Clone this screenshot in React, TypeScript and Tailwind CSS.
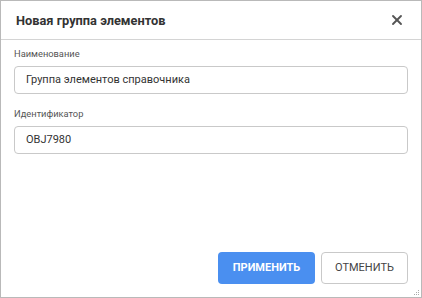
import { X } from 'lucide-react';

const font = { fontFamily: 'Roboto, "Noto Sans", sans-serif' };

function Field({ label, value }: { label: string; value: string }) {
  return (
    <div className="flex flex-col">
      <label className="h-[14px] text-[9.3px] leading-[14px] text-[#555]">{label}</label>
      <div className="mt-[5px] flex h-[28px] items-center rounded-[4px] border border-[#c9c9c9] px-[11px] text-[11px] text-[#333]">
        {value}
      </div>
    </div>
  );
}

export default function App() {
  return (
    <div
      className="relative flex h-[298px] w-[422px] flex-col border border-[#b9b9b9] bg-white"
      style={font}
    >
      <div className="flex h-[39px] shrink-0 items-center justify-between border-b border-[#d4d4d4] pl-[15px] pr-[16px]">
        <span className="pt-[2px] text-[12.8px] font-bold text-[#333]">Новая группа элементов</span>
        <X className="h-[16px] w-[16px] text-[#555]" strokeWidth={2.8} />
      </div>

      <div className="flex flex-col gap-[13px] px-[13px] pt-[7px]">
        <Field label="Наименование" value="Группа элементов справочника" />
        <Field label="Идентификатор" value="OBJ7980" />
      </div>

      <div className="mt-auto flex justify-end gap-[6px] pb-[13px] pr-[13px]">
        <button className="h-[32px] w-[97px] rounded-[4px] bg-[#4a8ff0] text-[11px] font-bold text-white">
          ПРИМЕНИТЬ
        </button>
        <button className="h-[32px] w-[87px] rounded-[4px] border border-[#c9c9c9] bg-white text-[11px] text-[#444]">
          ОТМЕНИТЬ
        </button>
      </div>

      <svg className="absolute bottom-[1px] right-[1px]" width="6" height="6" viewBox="0 0 6 6">
        <rect x="4" y="0" width="1" height="1" fill="#aaa" />
        <rect x="2" y="2" width="1" height="1" fill="#aaa" />
        <rect x="4" y="2" width="1" height="1" fill="#aaa" />
        <rect x="0" y="4" width="1" height="1" fill="#aaa" />
        <rect x="2" y="4" width="1" height="1" fill="#aaa" />
        <rect x="4" y="4" width="1" height="1" fill="#aaa" />
      </svg>
    </div>
  );
}
